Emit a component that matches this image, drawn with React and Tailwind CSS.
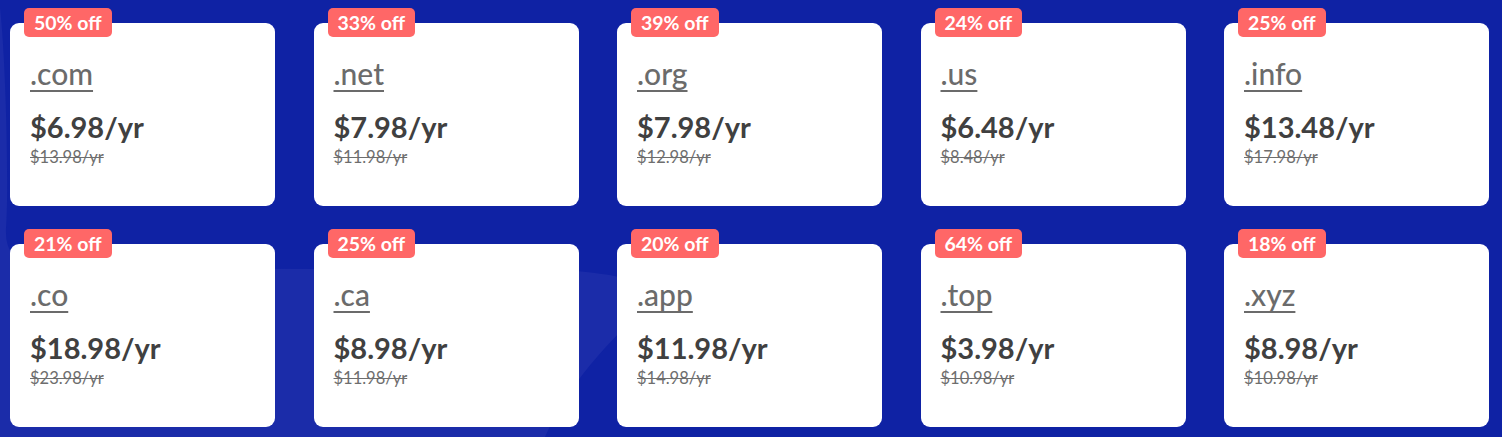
const DOMAINS = [
  { tld: ".com", price: "$6.98/yr", was: "$13.98/yr", off: "50% off" },
  { tld: ".net", price: "$7.98/yr", was: "$11.98/yr", off: "33% off" },
  { tld: ".org", price: "$7.98/yr", was: "$12.98/yr", off: "39% off" },
  { tld: ".us", price: "$6.48/yr", was: "$8.48/yr", off: "24% off" },
  { tld: ".info", price: "$13.48/yr", was: "$17.98/yr", off: "25% off" },
  { tld: ".co", price: "$18.98/yr", was: "$23.98/yr", off: "21% off" },
  { tld: ".ca", price: "$8.98/yr", was: "$11.98/yr", off: "25% off" },
  { tld: ".app", price: "$11.98/yr", was: "$14.98/yr", off: "20% off" },
  { tld: ".top", price: "$3.98/yr", was: "$10.98/yr", off: "64% off" },
  { tld: ".xyz", price: "$8.98/yr", was: "$10.98/yr", off: "18% off" },
];

const DomainCard = ({ tld, price, was, off }) => {
  return (
    <div className="relative h-[183px] rounded-[9px] bg-white px-5 pt-[33px]">
      <span className="absolute -top-[15px] left-[14px] rounded-[5px] bg-[#ff6767] px-[10px] h-[29px] flex items-center text-[19.5px] font-bold leading-none text-white">
        {off}
      </span>
      <a
        href="#"
        className="inline-block text-[30px] font-medium leading-[34px] text-[#6b6b6b] underline decoration-2 underline-offset-[5px]"
      >
        {tld}
      </a>
      <div className="mt-[19px] text-[29px] font-bold leading-[34px] text-[#404040]">
        {price}
      </div>
      <div className="mt-[3px] text-[16.5px] leading-[20px] text-[#6e6e6e] line-through">
        {was}
      </div>
    </div>
  );
};

export default function App() {
  return (
    <div
      className="relative h-[437px] w-[1502px] overflow-hidden bg-[#0f22a4]"
      style={{ fontFamily: "Lato, 'Open Sans', sans-serif" }}
    >
      <svg
        className="absolute inset-0"
        width="1502"
        height="437"
        viewBox="0 0 1502 437"
        aria-hidden="true"
      >
        <path
          d="M0 8 C6 60 9 190 6 228 Q4 267 45 268 L560 270 Q660 276 650 300 C620 335 575 370 545 437 L0 437 Z"
          fill="#1b2ca9"
        />
      </svg>
      <div className="relative grid w-[1479px] ml-[10px] grid-cols-5 gap-x-[38.5px] gap-y-[38px] pt-[23px]">
        {DOMAINS.map((d) => (
          <DomainCard key={d.tld} {...d} />
        ))}
      </div>
    </div>
  );
}
